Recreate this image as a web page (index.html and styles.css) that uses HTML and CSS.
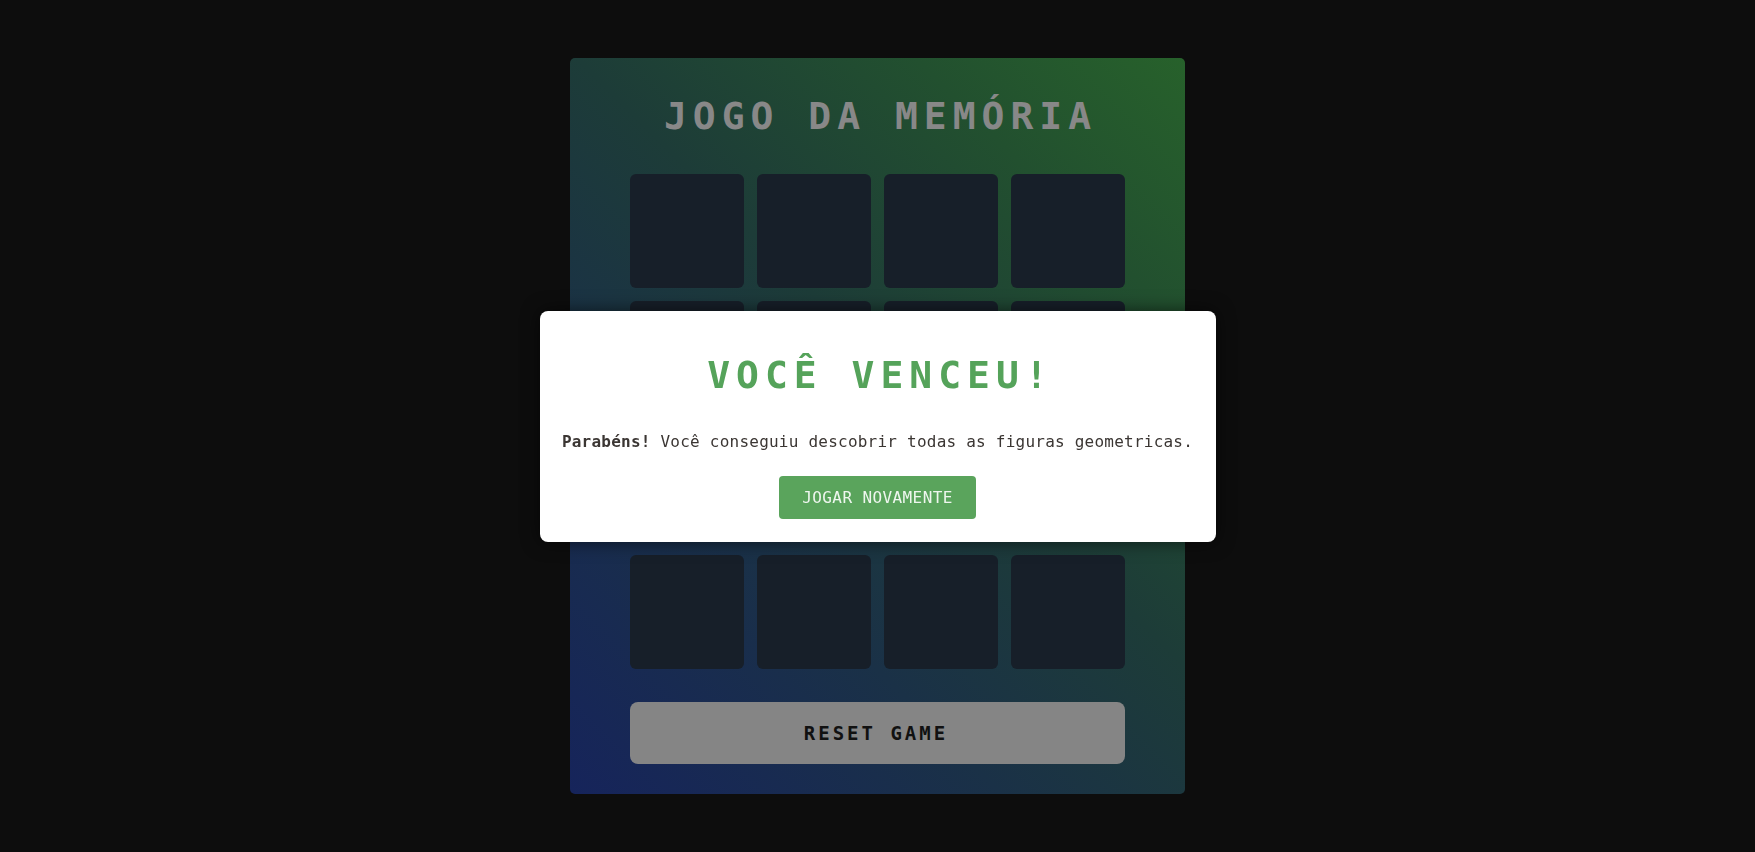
FILE: index.html
```html
<!DOCTYPE html>
<html lang="pt-BR">
<head>
<meta charset="UTF-8">
<title>Jogo da Memória</title>
<link rel="stylesheet" href="styles.css">
</head>
<body>
<main class="game">
  <h1 class="game-title">JOGO DA MEMÓRIA</h1>
  <div class="board">
    <div class="card"></div><div class="card"></div><div class="card"></div><div class="card"></div>
    <div class="card"></div><div class="card"></div><div class="card"></div><div class="card"></div>
    <div class="card"></div><div class="card"></div><div class="card"></div><div class="card"></div>
    <div class="card"></div><div class="card"></div><div class="card"></div><div class="card"></div>
  </div>
  <button class="reset-btn">RESET GAME</button>
</main>
<div class="overlay">
  <div class="modal">
    <h2 class="modal-title">VOCÊ VENCEU!</h2>
    <p class="modal-text"><strong>Parabéns!</strong> Você conseguiu descobrir todas as figuras geometricas.</p>
    <button class="play-again">JOGAR NOVAMENTE</button>
  </div>
</div>
</body>
</html>
```
FILE: styles.css
```css
* { box-sizing: border-box; }

html, body {
  margin: 0;
  height: 100%;
}

body {
  background: #0d0d0d;
  font-family: "DejaVu Sans Mono", "Liberation Mono", monospace;
  display: flex;
  align-items: center;
  justify-content: center;
}

.game {
  width: 615px;
  padding: 36px 60px 30px;
  border-radius: 5px;
  background: linear-gradient(45deg, #16245b 0%, #1a3147 32%, #1d3c38 55%, #22502f 80%, #27612b 100%);
  display: flex;
  flex-direction: column;
  align-items: center;
}

.game-title {
  margin: 0 0 36px;
  font-size: 38px;
  font-weight: bold;
  letter-spacing: 6px;
  padding-left: 6px;
  line-height: normal;
  color: #888888;
}

.board {
  display: grid;
  grid-template-columns: repeat(4, 114px);
  grid-auto-rows: 114px;
  gap: 13px;
}

.card {
  background: #171f29;
  border-radius: 6px;
}

.reset-btn {
  margin-top: 33px;
  width: 100%;
  height: 62px;
  border: none;
  border-radius: 8px;
  background: #858585;
  color: #111111;
  font-family: inherit;
  font-size: 19px;
  font-weight: bold;
  letter-spacing: 3px;
  padding-left: 3px;
}

.overlay {
  position: fixed;
  inset: 0;
  display: flex;
  align-items: center;
  justify-content: center;
}

.modal {
  width: 676px;
  height: 231px;
  background: #ffffff;
  border-radius: 8px;
  box-shadow: 0 0 18px rgba(0, 0, 0, 0.6);
  padding: 42px 20px 23px;
  display: flex;
  flex-direction: column;
  align-items: center;
}

.modal-title {
  margin: 0;
  font-size: 38px;
  font-weight: bold;
  letter-spacing: 6px;
  padding-left: 6px;
  line-height: normal;
  color: #55a35a;
}

.modal-text {
  margin: 35px 0 0;
  font-size: 16px;
  letter-spacing: 0.23px;
  line-height: normal;
  color: #3b3633;
  white-space: nowrap;
}

.modal-text strong {
  font-weight: bold;
}

.play-again {
  margin-top: 25px;
  height: 43px;
  padding: 0 23px;
  border: none;
  border-radius: 4px;
  background: #5aa45c;
  color: #eef6ee;
  font-family: inherit;
  font-size: 16px;
  letter-spacing: 0.4px;
}
```
